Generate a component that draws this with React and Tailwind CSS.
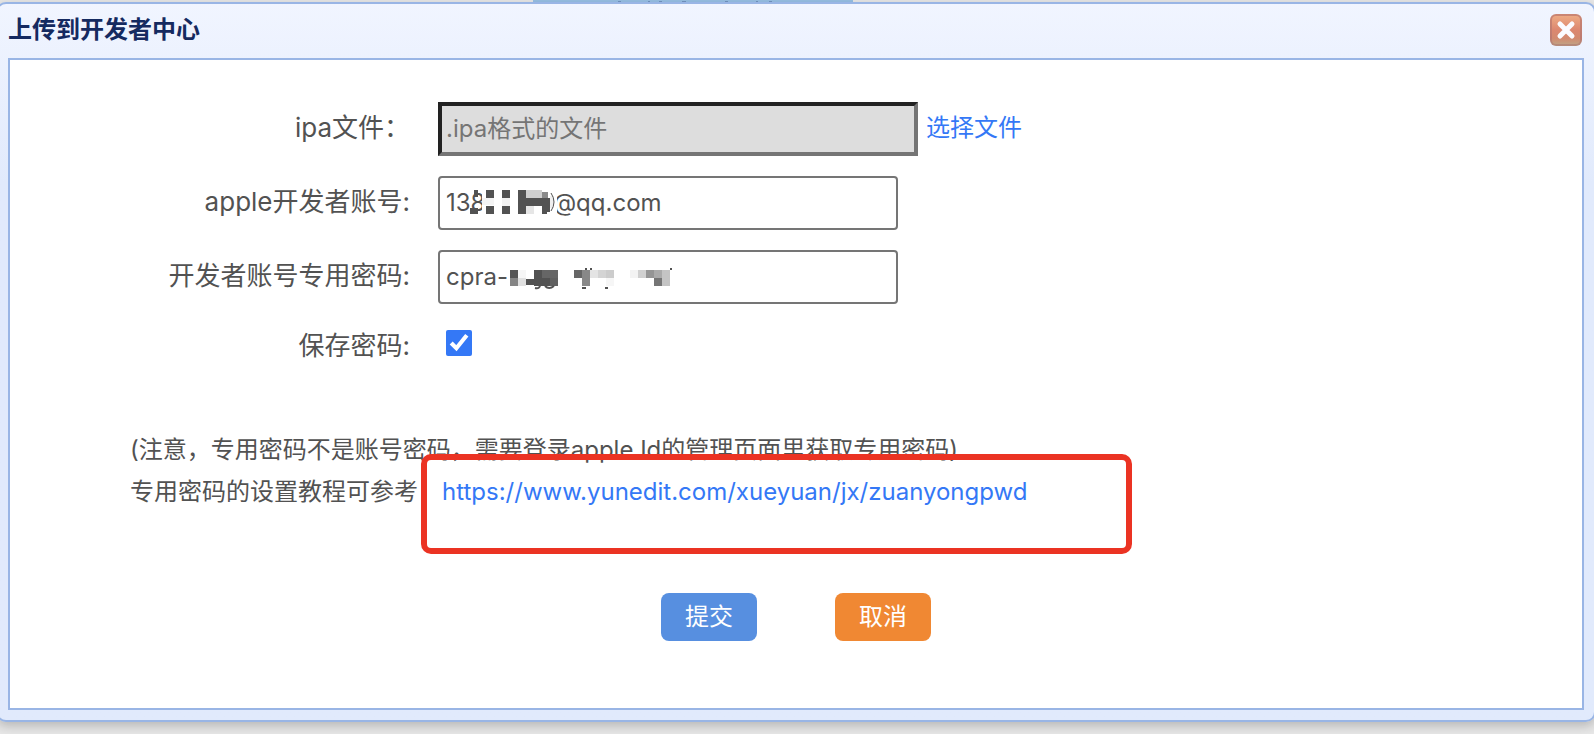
import React, { useState } from "react";

// Pixelated patches that hide the private part of a value: [x, y, width, height, fill]
const accountMosaic = [
  [44, 14, 75, 24, "#ffffff"],
  [36, 14, 4, 7, "#525252"],
  [32, 32, 8, 6, "#525252"],
  [44, 22, 12, 7, "#f4f4f4"],
  [48, 14, 8, 8, "#525252"],
  [48, 30, 8, 8, "#525252"],
  [64, 14, 8, 8, "#525252"],
  [64, 22, 8, 8, "#f2f2f2"],
  [64, 30, 8, 8, "#525252"],
  [80, 14, 8, 24, "#525252"],
  [88, 14, 16, 8, "#cfcfcf"],
  [88, 22, 16, 8, "#525252"],
  [88, 30, 8, 8, "#e6e6e6"],
  [104, 16, 6, 6, "#8a8a8a"],
  [104, 22, 8, 14, "#525252"],
  [104, 36, 5, 2, "#525252"],
  [112, 20, 4, 12, "#efefef"],
];

const passwordMosaic = [
  [72, 20, 8, 8, "#555555"],
  [72, 28, 8, 8, "#848484"],
  [80, 20, 8, 8, "#f6f6f6"],
  [80, 28, 8, 8, "#e0e0e0"],
  [88, 29, 8, 6, "#525252"],
  [96, 20, 8, 16, "#525252"],
  [104, 20, 16, 8, "#666666"],
  [104, 28, 8, 8, "#525252"],
  [112, 28, 8, 8, "#606060"],
  [136, 20, 8, 8, "#666666"],
  [144, 20, 8, 16, "#888888"],
  [152, 20, 8, 8, "#e4e4e4"],
  [160, 20, 8, 8, "#d4d4d4"],
  [168, 20, 8, 8, "#cccccc"],
  [168, 28, 8, 8, "#f6f6f6"],
  [147, 18, 2, 2, "#525252"],
  [152, 18, 2, 2, "#525252"],
  [144, 37, 4, 2, "#525252"],
  [167, 37, 3, 2, "#525252"],
  [192, 20, 8, 8, "#f3f3f3"],
  [200, 20, 8, 8, "#d0d0d0"],
  [208, 20, 8, 8, "#959595"],
  [216, 20, 8, 8, "#aaaaaa"],
  [216, 28, 8, 8, "#757575"],
  [224, 20, 8, 16, "#c4c4c4"],
  [232, 18, 2, 2, "#525252"],
];

const Mosaic = ({ cells, strokes, strokeWidth }) => (
  <svg className="absolute left-0 top-0 pointer-events-none" width="240" height="54" aria-hidden="true">
    {cells.map(([x, y, w, h, fill]) => (
      <rect key={`${x}-${y}`} x={x} y={y} width={w} height={h} fill={fill} />
    ))}
    <path d={strokes} fill="none" stroke="#525252" strokeWidth={strokeWidth} />
  </svg>
);

const CloseIcon = () => (
  <svg width="32" height="32" viewBox="0 0 32 32" aria-hidden="true">
    <defs>
      <linearGradient id="close-edge" x1="0" y1="0" x2="0" y2="1">
        <stop offset="0" stopColor="#cb8673" />
        <stop offset="0.75" stopColor="#bd7a70" />
        <stop offset="1" stopColor="#b58d7c" />
      </linearGradient>
      <linearGradient id="close-fill" x1="0" y1="0" x2="0" y2="1">
        <stop offset="0" stopColor="#eda983" />
        <stop offset="0.5" stopColor="#dc8770" />
        <stop offset="0.8" stopColor="#d28a70" />
        <stop offset="1" stopColor="#c3a082" />
      </linearGradient>
    </defs>
    <rect width="32" height="32" rx="6" fill="url(#close-edge)" />
    <rect x="2" y="2" width="28" height="28" rx="4" fill="url(#close-fill)" />
    <path d="M10 10l12 12M22 10L10 22" stroke="#fbfbff" strokeWidth="5" strokeLinecap="round" />
  </svg>
);

const Row = ({ id, label, children }) => (
  <div className="flex items-center gap-7">
    <label htmlFor={id} className="w-[400px] shrink-0 pb-[2px] text-right text-[26px] leading-[44px]">
      {label}
    </label>
    {children}
  </div>
);

const App = () => {
  const [account, setAccount] = useState("138          @qq.com");
  const [password, setPassword] = useState("cpra-");
  const [save, setSave] = useState(true);

  return (
    <div className="min-h-screen overflow-hidden bg-[#e8e8e8] font-[Inter,'Noto_Sans_CJK_SC',sans-serif] text-2xl text-[#525252]">
      {/* Lower edge of the tab behind the dialog */}
      <div className="ml-[533px] h-[2px] w-80 bg-[#98c0e5]">
        <svg className="block" width="320" height="2" aria-hidden="true">
          <path d="M85 1.5h3M115 1.5h2M126 1.5h3M149 1.5h4M192 1.5h3M223 1.5h2M236 1.5h3" stroke="#6d8db8" />
        </svg>
      </div>

      <div className="-ml-1 -mr-[2px] rounded-[10px] border-2 border-[#99b5e5] bg-linear-to-b from-[#f1f5ff] to-[#e1eafc] to-25% px-[10px] pb-[10px] shadow-[0_4px_12px_rgba(0,0,0,0.22)]">
        <div className="flex items-center justify-between pt-[10px] pr-[2px] pb-3">
          <h1 className="text-2xl leading-8 font-semibold text-[#152a60]">上传到开发者中心</h1>
          <button type="button" aria-label="关闭">
            <CloseIcon />
          </button>
        </div>

        <form className="border-2 border-[#99b5e5] bg-white pt-[42px] pb-[67px]" onSubmit={(e) => e.preventDefault()}>
          <div className="flex flex-col gap-5">
            <Row id="ipa" label="ipa文件：">
              <div className="flex items-center gap-2">
                <input
                  id="ipa"
                  type="text"
                  readOnly
                  placeholder=".ipa格式的文件"
                  className="h-[54px] w-[480px] border-4 border-t-[#222222] border-r-[#757575] border-b-[#757575] border-l-[#222222] bg-[#dddddd] px-1 pb-[2px] placeholder:text-[#757575]"
                />
                <a href="#" className="pb-[2px] text-[#3478f6]">
                  选择文件
                </a>
              </div>
            </Row>
            <Row id="account" label="apple开发者账号:">
              <div className="relative">
                <input
                  id="account"
                  type="text"
                  value={account}
                  onChange={(e) => setAccount(e.target.value)}
                  className="block h-[54px] w-[460px] rounded-sm border-2 border-[#757575] px-[6px] pb-[2px]"
                />
                <Mosaic cells={accountMosaic} strokes="M113 17q6 9 0 18" strokeWidth="1" />
              </div>
            </Row>
            <Row id="password" label="开发者账号专用密码:">
              <div className="relative">
                <input
                  id="password"
                  type="text"
                  value={password}
                  onChange={(e) => setPassword(e.target.value)}
                  className="block h-[54px] w-[460px] rounded-sm border-2 border-[#757575] px-[6px] pb-[2px]"
                />
                <Mosaic cells={passwordMosaic} strokes="M97 38q5 1 5-3M107 36q4 4 9 0" strokeWidth="2" />
              </div>
            </Row>
            <Row id="save" label="保存密码:">
              <input
                id="save"
                type="checkbox"
                checked={save}
                onChange={(e) => setSave(e.target.checked)}
                className="mt-[6px] ml-2 size-[26px] self-start accent-[#3478f6]"
              />
            </Row>
          </div>

          <div className="mt-[59px] ml-[120px] leading-[42px]">
            <p>(注意，专用密码不是账号密码，需要登录apple Id的管理页面里获取专用密码)</p>
            <p className="relative">
              专用密码的设置教程可参考
              <a href="https://www.yunedit.com/xueyuan/jx/zuanyongpwd" className="ml-6 text-[#3478f6]">
                https://www.yunedit.com/xueyuan/jx/zuanyongpwd
              </a>
              {/* Red marker round the tutorial link */}
              <span className="pointer-events-none absolute -top-[17px] left-[291px] h-[100px] w-[711px] rounded-[10px] border-6 border-[#eb3323]"></span>
            </p>
          </div>

          <div className="mt-20 flex justify-center gap-[78px] text-white">
            <button type="submit" className="h-12 w-24 rounded-lg bg-[#578fe0]">
              提交
            </button>
            <button type="button" className="h-12 w-24 rounded-lg bg-[#f08833]">
              取消
            </button>
          </div>
        </form>
      </div>
    </div>
  );
};

export default App;
